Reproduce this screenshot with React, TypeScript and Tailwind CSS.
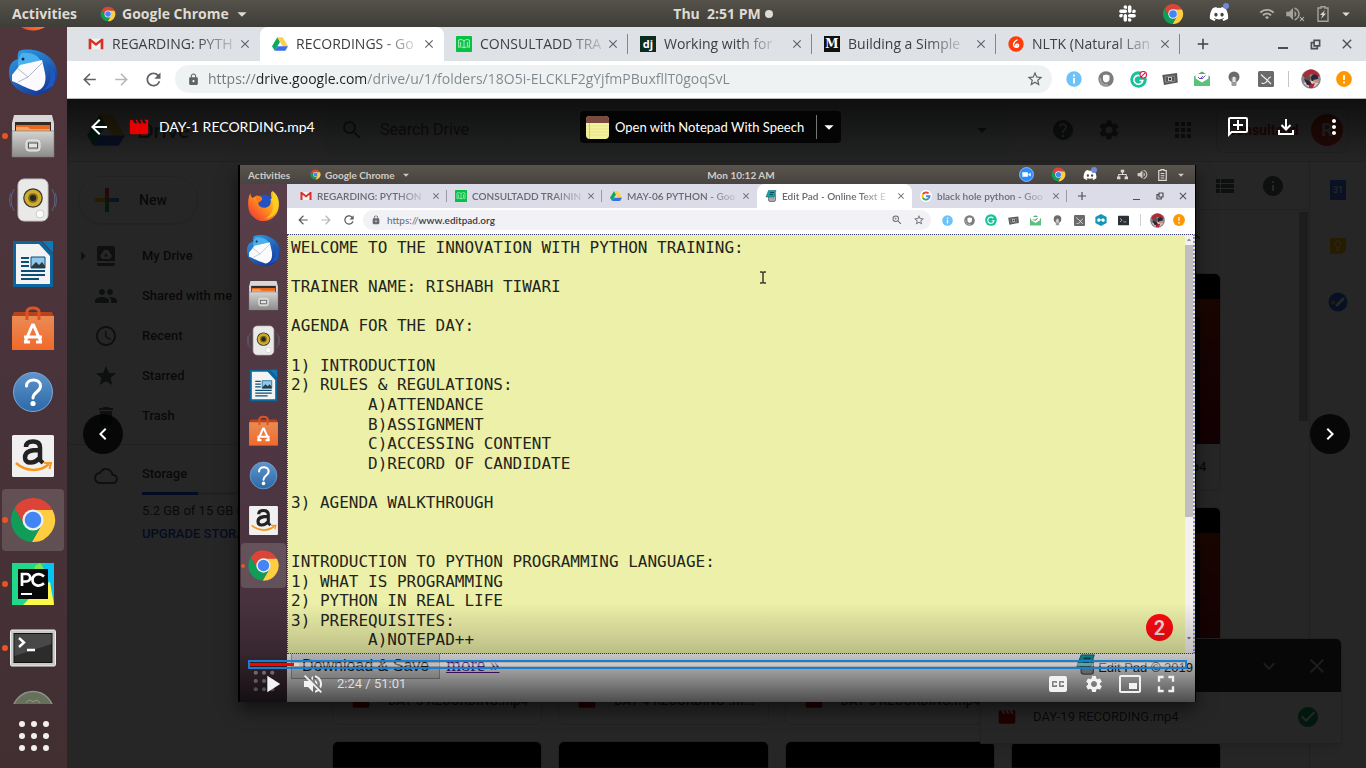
import type { ReactNode } from "react";
import {
  MdAccessTime,
  MdApps,
  MdArrowBack,
  MdArrowDropDown,
  MdArrowForward,
  MdArrowRight,
  MdArrowUpward,
  MdCheckCircle,
  MdClose,
  MdClosedCaption,
  MdDelete,
  MdExpandMore,
  MdFullscreen,
  MdHelp,
  MdInfo,
  MdKeyboardArrowLeft,
  MdKeyboardArrowRight,
  MdLock,
  MdMoreVert,
  MdMovie,
  MdOutlineAddComment,
  MdOutlineCloudQueue,
  MdPeople,
  MdPictureInPictureAlt,
  MdPlayArrow,
  MdRefresh,
  MdSearch,
  MdSettings,
  MdStar,
  MdStarBorder,
  MdViewList,
  MdVolumeOff,
  MdVolumeUp,
  MdWifi,
  MdZoomIn,
  MdAdd,
} from "react-icons/md";
import { FaSlack, FaDiscord } from "react-icons/fa";

type IconProps = { size: number };

/* ---------- brand and launcher drawings ---------- */

function ChromeLogo({ size }: IconProps) {
  return (
    <svg width={size} height={size} viewBox="0 0 48 48" aria-hidden="true">
      <path fill="#db4437" d="M5.54 12.03A22 22 0 0 1 43.6 14H24A10 10 0 0 0 15.34 29Z" />
      <path fill="#ffcd40" d="M43.6 14A22 22 0 0 1 22.86 45.97L32.66 29A10 10 0 0 0 24 14Z" />
      <path fill="#0f9d58" d="M22.86 45.97A22 22 0 0 1 5.54 12.03L15.34 29A10 10 0 0 0 32.66 29Z" />
      <circle cx="24" cy="24" r="10.5" fill="#f1f1f1" />
      <circle cx="24" cy="24" r="8.3" fill="#4285f4" />
    </svg>
  );
}

function DriveLogo({ size }: IconProps) {
  return (
    <svg width={size} height={size} viewBox="0 0 24 24" aria-hidden="true">
      <path fill="#0da960" d="M8 2 0 15.5 4 22l8-13Z" />
      <path fill="#ffcf48" d="M8 2h8l8 13.5h-8Z" />
      <path fill="#3b6ee8" d="M8 15.5h16L20 22H4Z" />
    </svg>
  );
}

function GmailLogo({ size }: IconProps) {
  return (
    <svg width={size} height={size} viewBox="0 0 24 24" aria-hidden="true">
      <path fill="#f2f2f2" d="M2 4h20v16H2Z" />
      <path fill="#d93025" d="M1 4h3l8 6.5L20 4h3v16h-4V9.5L12 15 5 9.5V20H1Z" />
    </svg>
  );
}

function BookLogo({ size }: IconProps) {
  return (
    <svg width={size} height={size} viewBox="0 0 24 24" aria-hidden="true">
      <rect width="24" height="24" rx="1" fill="#06c244" />
      <path d="M12 7C9 5 6 5 4 6v11c3-1 6-1 8 1 2-2 5-2 8-1V6c-2-1-5-1-8 1Zm0 0v11M7 9v6M17 9v6" fill="none" stroke="#c9f7d6" strokeWidth="1.3" />
    </svg>
  );
}

function LetterLogo({ label, kind }: { label: string; kind: "dj" | "m" }) {
  return (
    <span
      className={
        kind === "dj"
          ? "flex size-4 items-center justify-center bg-[#092e20] font-['Open_Sans',sans-serif] text-[11px] leading-3 font-bold text-white"
          : "flex size-4 items-center justify-center bg-[#12100e] font-['DejaVu_Serif',serif] text-[12px] leading-4 font-bold text-white"
      }
    >
      {label}
    </span>
  );
}

function GLogo({ size }: IconProps) {
  return (
    <svg width={size} height={size} viewBox="0 0 24 24" aria-hidden="true">
      <circle cx="12" cy="12" r="12" fill="#fff" />
      <g fill="none" strokeWidth="3.6">
        <path stroke="#ea4335" d="M17 7a7.2 7.2 0 0 0-11.3 1.6" />
        <path stroke="#fbbc05" d="M5.7 8.6a7.2 7.2 0 0 0 0 6.8" />
        <path stroke="#34a853" d="M5.7 15.4A7.2 7.2 0 0 0 16.8 17.4" />
        <path stroke="#4285f4" d="M16.8 17.4A7.2 7.2 0 0 0 19.2 12.5H12" />
      </g>
    </svg>
  );
}

function NltkLogo({ size }: IconProps) {
  return (
    <svg width={size} height={size} viewBox="0 0 24 24" aria-hidden="true">
      <circle cx="12" cy="12" r="11.5" fill="#ff3d0c" />
      <path d="M13.5 6c-4 2-5.500 5-5 8 .5 3.500 7 4 7.500.5.3-2.500-3.500-3-4.500-1-.5 1.500 1 2 2 1" fill="none" stroke="#fff" strokeWidth="2" strokeLinecap="round" />
    </svg>
  );
}

function PadLogo({ size }: IconProps) {
  return (
    <svg width={size} height={size} viewBox="0 0 24 24" aria-hidden="true">
      <rect x="7" y="6" width="14" height="17" rx="3" fill="#a7aaa9" stroke="#666" strokeWidth="1.5" />
      <path d="M7 1h15l-4 13H2Z" fill="#14a3ac" stroke="#0b5e66" />
      <path d="M10 5h8M9 9h7" stroke="#075059" strokeWidth="2" />
    </svg>
  );
}

function Firefox({ size }: IconProps) {
  return (
    <svg width={size} height={size} viewBox="0 0 48 48" aria-hidden="true">
      <defs>
        <linearGradient id="fox" x1="1" y1="0" x2="0" y2="1">
          <stop offset="0" stopColor="#ffe226" />
          <stop offset=".45" stopColor="#ff9a1a" />
          <stop offset="1" stopColor="#f2243b" />
        </linearGradient>
      </defs>
      <circle cx="25" cy="23" r="15" fill="#2352c7" />
      <path d="M5 6c0 3 1 5 3 7l5-3c4-1 8 1 9 4 0 3-4 4-6 6 1 6 6 8 12 7 5-1 8-6 6-12 4-1 3-6 3-12 6 4 9 12 9 20a22 22 0 0 1-44 3C1 18 2 11 5 6Z" fill="url(#fox)" />
      <path d="M37 3c7 5 11 13 9 22-2 10-10 17-19 18 9-5 13-13 10-24-1-6-3-9-2-14Z" fill="#ffd21f" opacity=".8" />
      <path d="M13 10c4-1 8 1 9 4 0 3-4 4-6 6-2-4-4-6-3-10Z" fill="#ff7a16" />
    </svg>
  );
}

function Thunderbird({ size }: IconProps) {
  return (
    <svg width={size} height={size} viewBox="0 0 48 48" aria-hidden="true">
      <defs>
        <linearGradient id="bird" x1="0" y1="0" x2=".6" y2="1">
          <stop offset="0" stopColor="#2fa4ea" />
          <stop offset="1" stopColor="#173a9b" />
        </linearGradient>
      </defs>
      <path d="M10 3C24-2 48 6 48 26c0 13-12 22-24 21C10 45 0 37 0 25c0-9 3-12 9-14-1-3 0-6 1-8Z" fill="url(#bird)" />
      <path d="M13 5c8-1 17 2 19 9-7-1-12 0-15 4-3-2-5-1-8 1 0-7 0-10 4-14Z" fill="#4bb1ee" />
      <path d="M3 27 11 17 33 12 36 25C38 35 34 42 27 43 16 40 9 35 3 33Z" fill="#fbfbfd" />
      <path d="m8 20 11 9 14-14M19 29 9 34" fill="none" stroke="#b4b6c5" strokeWidth="1" />
      <path d="M37 15c8 10 5 22-5 29l12-6c4-8 3-18-7-23Z" fill="#1e58bd" />
      <circle cx="14" cy="11" r="1.5" fill="#0e2a55" />
    </svg>
  );
}

function Files({ size }: IconProps) {
  return (
    <svg width={size} height={size} viewBox="0 0 48 48" aria-hidden="true">
      <defs>
        <linearGradient id="cab" x2="0" y2="1">
          <stop offset="0" stopColor="#d4d3d1" />
          <stop offset="1" stopColor="#8b8b89" />
        </linearGradient>
      </defs>
      <path d="M5 3h38l2 8v34H3V11Z" fill="#d8d7d5" />
      <path d="M6 10h36v10H6Z" fill="#2f2927" />
      <path d="M7 13h34v8H7Z" fill="#e9681d" />
      <path d="M7 15h12l2 2h20v5H7Z" fill="#f5a262" />
      <path d="M3 19h42v26H3Z" fill="url(#cab)" stroke="#777" strokeWidth=".6" />
      <rect x="17" y="28" width="14" height="11" rx="3" fill="#c9c8c6" stroke="#eee" />
      <rect x="19.5" y="31" width="9" height="5" fill="#e5e4e2" stroke="#555" />
    </svg>
  );
}

function Speaker({ size }: IconProps) {
  return (
    <svg width={size} height={size} viewBox="0 0 48 48" aria-hidden="true">
      <path d="M5 13q-6 11 0 22M1.500 17q-2 7 0 14M43 13q6 11 0 22M46.500 17q2 7 0 14" fill="none" stroke="#5b6080" strokeWidth="1" />
      <rect x="9" y="3" width="30" height="42" rx="6" fill="#e9e9e7" stroke="#c2c2c0" />
      <circle cx="24" cy="22" r="9.8" fill="#343434" />
      <circle cx="24" cy="22" r="8.6" fill="#d1ac2c" />
      <circle cx="24" cy="22" r="4.8" fill="#7a6a20" />
      <circle cx="24" cy="22" r="3" fill="#26251f" />
      <circle cx="31" cy="38" r="4" fill="#fafafa" stroke="#ccc" />
    </svg>
  );
}

function Writer({ size }: IconProps) {
  return (
    <svg width={size} height={size} viewBox="0 0 48 48" aria-hidden="true">
      <path d="M4 1h28l12 13v32a1 1 0 0 1-1 1H5a1 1 0 0 1-1-1Z" fill="#0b659f" />
      <path d="M33 1h11v12Z" fill="#0c7ab8" />
      <path d="M7 4h23l11 12v28H7Z" fill="#f3f3f3" />
      <path d="M12 18h8M12 22h8M12 26h8M12 31h24M12 35h24M12 39h18" stroke="#0d4d76" strokeWidth="2" />
      <path d="M22 17h14v11H22Z" fill="#8ec8ef" stroke="#0d4d76" />
      <path d="m22 27 5-5 3 3 3-3 3 4v2H22Z" fill="#2f3b3c" />
    </svg>
  );
}

function Software({ size }: IconProps) {
  return (
    <svg width={size} height={size} viewBox="0 0 48 48" aria-hidden="true">
      <defs>
        <linearGradient id="bag" x2="0" y2="1">
          <stop offset="0" stopColor="#e98b54" />
          <stop offset="1" stopColor="#f2692a" />
        </linearGradient>
      </defs>
      <path d="M5 8h38l2 5H3Z" fill="#b8421b" />
      <path d="M3 12h42v34H3Z" fill="url(#bag)" />
      <path d="M18 16V8q0-4 6-4t6 4v8" fill="none" stroke="#dc5423" strokeWidth="3" />
      <path d="M16 38 23.500 21h1L32 38M15 33h18M15 38h6M27 38h6" fill="none" stroke="#fff" strokeWidth="3" />
    </svg>
  );
}

function HelpOrb({ size }: IconProps) {
  return (
    <svg width={size} height={size} viewBox="0 0 48 48" aria-hidden="true">
      <defs>
        <linearGradient id="orb" x2="0" y2="1">
          <stop offset="0" stopColor="#6095cb" />
          <stop offset="1" stopColor="#2b69a8" />
        </linearGradient>
      </defs>
      <circle cx="24" cy="24" r="19.5" fill="url(#orb)" stroke="#7ba8d6" />
      <path d="M17.5 18c0-8 14-8 14 0 0 6-7.500 6-7.500 12" fill="none" stroke="#fff" strokeWidth="3" strokeLinecap="round" />
      <circle cx="24" cy="35.5" r="2.6" fill="#fff" />
    </svg>
  );
}

function Amazon({ size }: IconProps) {
  return (
    <svg width={size} height={size} viewBox="0 0 48 48" aria-hidden="true">
      <rect x="3" y="3" width="42" height="42" rx="1.5" fill="#f0f0f0" />
      <path d="M17 15c0-4 3-5.500 7-5.500 5 0 7 2 7 6V27M31 18c-9 0-15 1-15 7.500 0 6.500 9 7 15 0" fill="none" stroke="#222" strokeWidth="4.5" />
      <path d="m29 26 5 5" stroke="#222" strokeWidth="4" />
      <path d="M7 31c10 9 24 9 33 1" fill="none" stroke="#f7981d" strokeWidth="2.5" />
      <path d="M35 31h7l-1.500 6" fill="none" stroke="#f7981d" strokeWidth="2" />
    </svg>
  );
}

function PyCharm({ size }: IconProps) {
  return (
    <svg width={size} height={size} viewBox="0 0 48 48" aria-hidden="true">
      <path d="M3 3h42v42H3Z" fill="#21d789" />
      <path d="m28 3 5 4 4-4h8v36L28 18Z" fill="#07c3f2" />
      <path d="m26 6 5-3 4 6-2 10-9-6Z" fill="#7ee54d" />
      <path d="M14 45 34 24l7-2 4 23Z" fill="#fcf84a" />
      <rect x="9" y="9" width="30" height="30" fill="#090909" />
      <path d="M13 26V14h4.500a3.600 3.600 0 0 1 0 7.500H13M35 16.500c-5-5-11.500-1.500-11.500 3.500s6.500 8 11.500 3.300" fill="none" stroke="#fff" strokeWidth="2.700" />
      <path d="M12 34h11" stroke="#fff" strokeWidth="2" />
    </svg>
  );
}

function Terminal({ size }: IconProps) {
  return (
    <svg width={size} height={size} viewBox="0 0 48 48" aria-hidden="true">
      <rect x="1.5" y="6" width="45" height="36" rx="1.5" fill="#c9c9c7" stroke="#eee" />
      <rect x="5" y="9.5" width="38" height="29" fill="#2b2c2b" stroke="#111" />
      <path d="M5.500 10h37v10l-37 12Z" fill="#474847" />
      <path d="m10 14 5 4.500-5 4.500M18 26h8" fill="none" stroke="#fff" strokeWidth="2.4" />
    </svg>
  );
}

function GreenOrb({ size }: IconProps) {
  return (
    <svg width={size} height={size} viewBox="0 0 48 48" aria-hidden="true">
      <circle cx="24" cy="24" r="20.5" fill="#66705a" stroke="#8d938b" strokeWidth="1.5" />
      <path d="M17 15q3-5 7-1 4-4 7 1" fill="none" stroke="#939b88" />
    </svg>
  );
}

function DotGrid({ size }: IconProps) {
  const steps = [4, 16, 28];
  return (
    <svg width={size} height={size} viewBox="0 0 32 32" aria-hidden="true" fill="currentColor">
      {steps.map((y) => steps.map((x) => <circle key={`${x}-${y}`} cx={x} cy={y} r="3" />))}
    </svg>
  );
}

/* ---------- toolbar extension drawings ---------- */

function InfoExt({ size }: IconProps) {
  return (
    <svg width={size} height={size} viewBox="0 0 16 16" aria-hidden="true">
      <circle cx="8" cy="8" r="7.7" fill="#6cc3fa" />
      <path d="M8 3.500v2M8 7v5.500" stroke="#fff" strokeWidth="2" />
    </svg>
  );
}

function ShieldExt({ size }: IconProps) {
  return (
    <svg width={size} height={size} viewBox="0 0 16 16" aria-hidden="true">
      <circle cx="8" cy="8" r="7.7" fill="#7c7c7c" />
      <path d="M2.500 7a5.500 5.500 0 0 0 7.500 6.500" fill="none" stroke="#a5a5a5" strokeWidth="1.6" />
      <path d="M5 4.500 8 3.500l3.500 1V8c0 1.700-1.500 3-3.500 3.600C6 11 5 9.700 5 8Z" fill="#fff" />
    </svg>
  );
}

function GrammarExt({ size, off }: IconProps & { off?: boolean }) {
  return (
    <svg width={size} height={size} viewBox="0 0 16 16" aria-hidden="true">
      <circle cx="8" cy="8" r="7.8" fill="#15c39a" />
      <path d="M11 5.500A4.200 4.200 0 1 0 12 9H9" fill="none" stroke="#fff" strokeWidth="1.5" />
      {off && (
        <>
          <circle cx="12.500" cy="3.500" r="3" fill="#fff" stroke="#d8153a" />
          <path d="m14.500 1.500-4 4" stroke="#d8153a" />
        </>
      )}
    </svg>
  );
}

function CameraExt({ size }: IconProps) {
  return (
    <svg width={size} height={size} viewBox="0 0 16 16" aria-hidden="true">
      <path d="M.3 4 15 2l.8 9.500L2 14Z" fill="#575757" />
      <path d="m3 5.800 9.500-1 .5 5.500-9.300 1Z" fill="none" stroke="#999" strokeWidth=".8" />
      <rect x="6" y="6" width="4" height="4" fill="#ccc" />
      <circle cx="8" cy="8" r="1.2" fill="#333" />
    </svg>
  );
}

function MailExt({ size }: IconProps) {
  return (
    <svg width={size} height={size} viewBox="0 0 16 16" aria-hidden="true">
      <path d="M0 5.500 8 .5l8 5V15H0Z" fill="#4fae6b" />
      <path d="M1.500 3h13v7L8 12 1.500 9Z" fill="#fff" />
      <path d="M0 6.500 8 11.500l8-5V15H0Z" fill="#5cc17a" />
      <path d="m4 6 2 2 3-3M7 7l1 1 3.500-3.500" fill="none" stroke="#6a4bc4" />
    </svg>
  );
}

function BulbExt({ size }: IconProps) {
  return (
    <svg width={size} height={size} viewBox="0 0 16 16" aria-hidden="true">
      <circle cx="8" cy="6" r="5.5" fill="#6b6b6b" />
      <rect x="5.500" y="6" width="5" height="9" rx="1" fill="#9a9a9a" />
      <path d="M7.200 11V6.500q.8-1 1.600 0V11" fill="none" stroke="#fff" />
    </svg>
  );
}

function PenExt({ size }: IconProps) {
  return (
    <svg width={size} height={size} viewBox="0 0 16 16" aria-hidden="true">
      <rect width="16" height="16" rx="1.500" fill="#6a6a6a" />
      <path d="m3 3.500 6 5.500 4 4M3.500 12C6 13 8 12 9 10s2.500-4 4-4" fill="none" stroke="#eee" strokeWidth="1.1" />
    </svg>
  );
}

function InfinityExt({ size }: IconProps) {
  return (
    <svg width={size} height={size} viewBox="0 0 16 16" aria-hidden="true">
      <path d="m8 0 7.500 4v8L8 16 .5 12V4Z" fill="#1397b5" />
      <path d="M8 8C6 4 2.500 6 3 8.500S6.500 11 8 8s4.500-2.500 5 0-3 4-5 0Z" fill="#fff" />
    </svg>
  );
}

function ShellExt({ size }: IconProps) {
  return (
    <svg width={size} height={size} viewBox="0 0 16 16" aria-hidden="true">
      <rect y="1" width="16" height="14" rx="1" fill="#2c2f33" />
      <path d="m3 5 3 2.500L3 10M8 10h4" fill="none" stroke="#ddd" />
    </svg>
  );
}

function Avatar({ size }: IconProps) {
  return (
    <svg width={size} height={size} viewBox="0 0 20 20" aria-hidden="true">
      <circle cx="10" cy="10" r="9.8" fill="#8a8590" />
      <path d="M1.500 6q8.500-11 17 0l-1 2-7-3-7 4Z" fill="#b02a35" />
      <circle cx="6.500" cy="9" r="3" fill="#6b4d48" />
      <circle cx="13.500" cy="9" r="3.500" fill="#22293a" />
      <path d="M2.500 14q7-4 15 0-7 9-15 0Z" fill="#d4cdd0" />
      <path d="m3 10 6 2 3 5-6-1Z" fill="#2e2730" />
      <path d="m8 16 6-2-2 5H8Z" fill="#c0202e" />
      <path d="m12 11 5-1 1 3-4 1Z" fill="#c79473" />
    </svg>
  );
}

function AlertDot({ size }: IconProps) {
  return (
    <svg width={size} height={size} viewBox="0 0 16 16" aria-hidden="true">
      <circle cx="8" cy="8" r="7.9" fill="#ff9800" />
      <path d="M8 4v5M8 10.500v2" stroke="#fff" strokeWidth="1.8" />
    </svg>
  );
}

function ZoomLogo({ size }: IconProps) {
  return (
    <svg width={size} height={size} viewBox="0 0 16 16" aria-hidden="true">
      <circle cx="8" cy="8" r="7.4" fill="#2d8cff" stroke="#8cc0ff" />
      <path d="M3.500 5.500h6v5h-6ZM10 7.500l2.500-1.500v4L10 8.500Z" fill="#fff" />
    </svg>
  );
}

function NetworkIcon({ size }: IconProps) {
  return (
    <svg width={size} height={size} viewBox="0 0 16 16" aria-hidden="true" fill="#dcdad7">
      <path d="M5.500 1h5v4h-5ZM0 11h5v4H0ZM11 11h5v4h-5ZM7.300 5h1.400v2.300h5.500V11h-1.400V8.700H3.200V11H1.800V7.300h5.500Z" />
    </svg>
  );
}

function ChargingIcon() {
  return (
    <svg width="12" height="16" viewBox="0 0 12 16" aria-hidden="true">
      <path d="M4 2V.8h4V2h3v13.200H1V2Z" fill="none" stroke="#a5a29b" strokeWidth="1.4" />
      <path d="M8 4 3 9h2.500L4 13l5-5.500H6.500Z" fill="#dfdbd2" />
    </svg>
  );
}

function BatteryIcon() {
  return (
    <svg width="9" height="12" viewBox="0 0 12 16" aria-hidden="true" fill="none" stroke="#dcdad7" strokeWidth="1.6">
      <path d="M4 2V.8h4V2h3v13.200H1V2ZM3.500 6h5M3.500 9h5M3.500 12h5" />
    </svg>
  );
}

function DownloadIcon() {
  return (
    <svg width="24" height="24" viewBox="0 0 24 24" aria-hidden="true" fill="none" stroke="currentColor" strokeWidth="2">
      <path d="M12 4v10M7.500 10l4.500 4.500 4.500-4.500M5 15v4h14v-4" />
    </svg>
  );
}

function RestoreIcon({ size }: IconProps) {
  return (
    <svg width={size} height={size} viewBox="0 0 12 12" aria-hidden="true" fill="none" stroke="#4b4f54" strokeWidth="1.8">
      <path d="M4.500 1.500h6v6h-6ZM4 4H1.500v6.500h6.500V8" />
    </svg>
  );
}

/* ---------- browser chrome, shared by both windows ---------- */

type Tab = { title: string; icon: ReactNode; active?: boolean; divider?: boolean };

function TabStrip({ tabs, small }: { tabs: Tab[]; small?: boolean }) {
  return (
    <div className={small ? "flex h-6 shrink-0 items-stretch bg-[#dbdce7] pl-[5px]" : "flex h-[34px] shrink-0 items-stretch bg-[#dee1e6] pl-[9px]"}>
      <div role="tablist" className="flex">
        {tabs.map((tab) => (
          <div
            key={tab.title}
            className={
              (small ? "flex w-[155px] items-center pl-2 " : "flex w-[184px] items-center pl-3 ") +
              (tab.active ? "rounded-t-lg bg-white" : "")
            }
          >
            <button
              role="tab"
              aria-selected={!!tab.active}
              className={
                small
                  ? "flex w-[131px] items-center gap-[5px] text-left text-[10px] leading-4 font-semibold text-[#6a6a72]"
                  : "flex w-[150px] items-center gap-2 text-left text-[14px] leading-5 text-[#3c4043]"
              }
            >
              <span className="flex shrink-0">{tab.icon}</span>
              <span
                className={
                  small
                    ? "whitespace-nowrap [mask-image:linear-gradient(to_right,black_75%,rgba(0,0,0,0.2))]"
                    : "whitespace-nowrap [mask-image:linear-gradient(to_right,black_70%,rgba(0,0,0,0.2))]"
                }
              >
                {tab.title}
              </span>
            </button>
            <div className="flex flex-1 items-center justify-between">
              <button aria-label={`Close ${tab.title}`} className="text-[#5f6368]">
                <MdClose size={small ? 10 : 14} />
              </button>
              {tab.divider && <span className={small ? "h-3 w-px bg-[#9a9aa5]" : "h-5 w-px bg-[#85888c]"} />}
            </div>
          </div>
        ))}
      </div>
      <button aria-label="New tab" className={small ? "ml-2 text-[#4b4f54]" : "ml-3.5 text-[#3c4043]"}>
        <MdAdd size={small ? 14 : 18} />
      </button>
      <div className={small ? "ml-auto flex items-center pr-px text-[#4b4f54]" : "ml-auto flex items-center pr-[3px] text-[#4b4f54]"}>
        <button aria-label="Minimize" className={small ? "flex w-[23px] justify-center pt-1.5" : "flex w-8 justify-center pt-2"}>
          <span className={small ? "h-px w-[7px] bg-[#4b4f54]" : "h-0.5 w-2.5 bg-[#4b4f54]"} />
        </button>
        <button aria-label="Restore" className={small ? "flex w-[23px] justify-center" : "flex w-8 justify-center"}>
          <RestoreIcon size={small ? 8 : 11} />
        </button>
        <button aria-label="Close window" className={small ? "flex w-[23px] justify-center" : "flex w-8 justify-center"}>
          <MdClose size={small ? 12 : 16} />
        </button>
      </div>
    </div>
  );
}

const mainTabs: Tab[] = [
  { title: "REGARDING: PYTH", icon: <GmailLogo size={16} /> },
  { title: "RECORDINGS - Go", icon: <DriveLogo size={16} />, active: true },
  { title: "CONSULTADD TRA", icon: <BookLogo size={16} />, divider: true },
  { title: "Working with for", icon: <LetterLogo label="dj" kind="dj" />, divider: true },
  { title: "Building a Simple", icon: <LetterLogo label="M" kind="m" />, divider: true },
  { title: "NLTK (Natural Lan", icon: <NltkLogo size={16} />, divider: true },
];

const frameTabs: Tab[] = [
  { title: "REGARDING: PYTHON", icon: <GmailLogo size={12} />, divider: true },
  { title: "CONSULTADD TRAININ", icon: <BookLogo size={12} />, divider: true },
  { title: "MAY-06 PYTHON - Goo", icon: <DriveLogo size={12} /> },
  { title: "Edit Pad - Online Text E", icon: <PadLogo size={12} />, active: true },
  { title: "black hole python - Goo", icon: <GLogo size={12} />, divider: true },
];

const mainExtensions = [
  <InfoExt size={16} />,
  <ShieldExt size={16} />,
  <GrammarExt size={17} off />,
  <CameraExt size={16} />,
  <MailExt size={16} />,
  <BulbExt size={16} />,
  <PenExt size={16} />,
];

const frameExtensions = [
  <InfoExt size={11} />,
  <ShieldExt size={11} />,
  <GrammarExt size={12} />,
  <CameraExt size={11} />,
  <MailExt size={11} />,
  <BulbExt size={11} />,
  <PenExt size={11} />,
  <InfinityExt size={12} />,
  <ShellExt size={11} />,
];

function Toolbar() {
  return (
    <div className="flex h-[38px] shrink-0 items-center border-b border-[#b8b8ba] bg-white pr-[6px] pb-px pl-[6px] text-[#5f6368]">
      <button aria-label="Back" className="flex w-8 justify-center"><MdArrowBack size={19} /></button>
      <button aria-label="Forward" className="flex w-8 justify-center text-[#b5b7ba]"><MdArrowForward size={19} /></button>
      <button aria-label="Reload" className="flex w-8 justify-center"><MdRefresh size={21} /></button>
      <div className="mx-[6px] flex h-7 flex-1 items-center rounded-full bg-[#eff2f3] pr-2 pl-3">
        <MdLock size={13} />
        <input
          aria-label="Address"
          defaultValue="https://drive.google.com/drive/u/1/folders/18O5i-ELCKLF2gYjfmPBuxfllT0goqSvL"
          className="ml-2 min-w-0 flex-1 bg-[linear-gradient(to_right,#70757a_49px,#202124_49px,#202124_158px,#80868b_158px)] bg-clip-text text-[14px] leading-5 text-transparent outline-none"
        />
        <button aria-label="Bookmark"><MdStarBorder size={18} /></button>
      </div>
      {mainExtensions.map((icon, i) => (
        <button key={i} aria-label={`Extension ${i + 1}`} className="flex w-8 justify-center">{icon}</button>
      ))}
      <span className="flex w-3 justify-center"><span className="h-4 w-px bg-[#c4c6c9]" /></span>
      <button aria-label="Profile" className="flex w-[34px] justify-center"><Avatar size={20} /></button>
      <button aria-label="Update" className="flex w-8 justify-center"><AlertDot size={16} /></button>
    </div>
  );
}

function FrameToolbar() {
  return (
    <div className="flex h-[26px] shrink-0 items-center bg-white pr-[5px] pb-0.5 pl-1 text-[#5a5a60]">
      <span className="flex w-[23px] justify-center"><MdArrowBack size={14} /></span>
      <span className="flex w-[23px] justify-center text-[#b5b7ba]"><MdArrowForward size={14} /></span>
      <span className="flex w-[23px] justify-center"><MdRefresh size={14} /></span>
      <div className="mr-[5px] ml-[3px] flex h-5 flex-1 items-center rounded-full bg-[#f2f1f6] pr-1.5 pl-2 text-[10px] leading-4 text-[#6a6a72]">
        <MdLock size={10} />
        <span className="ml-1.5 flex-1">https://<span className="font-semibold text-[#3a3a40]">www.editpad.org</span></span>
        <MdZoomIn size={12} />
        <MdStarBorder size={12} className="ml-2.5" />
      </div>
      {frameExtensions.map((icon, i) => (
        <span key={i} className="flex w-[22px] justify-center">{icon}</span>
      ))}
      <span className="flex w-3 justify-center"><span className="h-3 w-px bg-[#d0d0d4]" /></span>
      <span className="flex w-[22px] justify-center"><Avatar size={15} /></span>
      <span className="flex w-[22px] justify-center"><AlertDot size={12} /></span>
    </div>
  );
}

/* ---------- desktop chrome ---------- */

function Discord({ size }: IconProps) {
  return (
    <span className="relative flex text-white">
      <FaDiscord size={size} />
      <span className="absolute -top-px right-0 size-1.5 rounded-full bg-[#7289da]" />
    </span>
  );
}

function SystemBar() {
  return (
    <header className="grid h-[27px] shrink-0 grid-cols-[673fr_auto_593fr] items-center bg-linear-to-b from-[#55524a] to-[#3e3d38] text-[14px] leading-5 font-bold text-[#dfdbd2]">
      <div className="flex items-center">
        <button className="ml-3 w-[88px] text-left">Activities</button>
        <button className="flex items-center gap-1.5">
          <ChromeLogo size={16} />
          Google Chrome
          <MdArrowDropDown size={22} className="-ml-1" />
        </button>
      </div>
      <button className="flex items-center gap-2">
        Thu&nbsp; 2:51 PM
        <span className="-ml-1 size-2 rounded-full bg-[#dfdbd2]" />
      </button>
      <div className="flex items-center justify-end pr-[11px]">
        <span className="flex w-[46px] justify-center text-white"><FaSlack size={19} /></span>
        <span className="flex w-[46px] justify-center"><ChromeLogo size={22} /></span>
        <span className="mr-[11px] flex w-[46px] justify-center"><Discord size={20} /></span>
        <span className="flex w-7 justify-center text-[#b5b2ab]"><MdWifi size={16} /></span>
        <span className="flex w-7 items-end justify-center text-[#a5a29b]"><MdVolumeUp size={18} /><MdClose size={8} className="-ml-1 text-[#dfdbd2]" /></span>
        <span className="flex w-7 justify-center"><ChargingIcon /></span>
        <span className="flex w-[18px] justify-center"><MdArrowDropDown size={22} /></span>
      </div>
    </header>
  );
}

type DockItem = { name: string; icon: (p: IconProps) => ReactNode; running?: boolean; current?: boolean };

const apps: DockItem[] = [
  { name: "Firefox", icon: Firefox },
  { name: "Thunderbird", icon: Thunderbird },
  { name: "Files", icon: Files, running: true },
  { name: "Rhythmbox", icon: Speaker },
  { name: "Writer", icon: Writer },
  { name: "Software", icon: Software },
  { name: "Help", icon: HelpOrb },
  { name: "Amazon", icon: Amazon },
  { name: "Chrome", icon: ChromeLogo, running: true, current: true },
  { name: "PyCharm", icon: PyCharm, running: true },
  { name: "Terminal", icon: Terminal, running: true },
  { name: "Trash", icon: GreenOrb },
];

function Dock() {
  return (
    <nav aria-label="Dock" className="flex w-[67px] shrink-0 flex-col bg-linear-to-b from-[#50363c] via-[#49333a] to-[#412f32]">
      <div className="min-h-0 flex-1 overflow-hidden">
        <ul className="-mt-[51px]">
          {apps.map(({ name, icon: Icon, running, current }) => (
            <li key={name} className="relative flex h-16 items-center pl-0.5">
              {running && <span className="absolute left-0.5 size-1.5 rounded-full bg-[#e95420]" />}
              <button aria-label={name} className={current ? "flex size-[62px] items-center justify-center rounded bg-white/15" : "flex size-[62px] items-center justify-center"}>
                <Icon size={48} />
              </button>
            </li>
          ))}
        </ul>
      </div>
      <button aria-label="Show applications" className="flex h-16 shrink-0 items-center justify-center text-[#f2f1f0]">
        <DotGrid size={32} />
      </button>
    </nav>
  );
}

/* ---------- Drive page under the preview ---------- */

type Place = { label: string; icon: ReactNode; expandable?: boolean };

function DriveDisk() {
  return (
    <svg width="20" height="22" viewBox="0 0 20 22" aria-hidden="true">
      <path d="M1 3a2 2 0 0 1 2-2h14a2 2 0 0 1 2 2v13H1Z" fill="#5f6368" />
      <path d="M1 18h18v1a2 2 0 0 1-2 2H3a2 2 0 0 1-2-2Z" fill="#5f6368" />
      <path d="M8 5h4l4 6-2 3H6l-2-3Zm2 3-2 3.500h4Z" fill="#fff" fillRule="evenodd" />
    </svg>
  );
}

const places: Place[] = [
  { label: "My Drive", icon: <DriveDisk />, expandable: true },
  { label: "Shared with me", icon: <MdPeople size={24} /> },
  { label: "Recent", icon: <MdAccessTime size={24} /> },
  { label: "Starred", icon: <MdStar size={24} /> },
  { label: "Trash", icon: <MdDelete size={24} /> },
];

const recordings = [
  "DAY-1 RECORDING.mp4",
  "DAY-1 RECORDING.mp4",
  "DAY-2 RECORDING.mp4",
  "DAY-2 RECORDING.mp4",
  "DAY-3 RECORDING.mp4",
  "DAY-4 RECORDING-.m...",
  "DAY-5 RECORDING.mp4",
  "DAY-6 RECORDING.mp4",
  "DAY-7 RECORDING.mp4",
  "DAY-8 RECORDING.mp4",
  "DAY-9 RECORDING.mp4",
  "DAY-9 RECORDING.mp4",
];

function DrivePage() {
  return (
    <div className="flex h-full flex-col bg-white font-[Roboto,sans-serif] text-[14px] leading-5 font-medium text-[#3c4043]">
      <div className="flex h-[63px] shrink-0 items-center border-b border-[#dadce0]">
        <div className="flex w-[257px] shrink-0 items-center gap-3 pl-5 font-[Lato,sans-serif] text-[22px] leading-7 text-[#5f6368]">
          <DriveLogo size={38} />
          Drive
        </div>
        <div className="flex h-12 min-w-0 flex-1 items-center rounded-lg bg-[#f1f3f4] pr-4 pl-4 text-[#5f6368]">
          <MdSearch size={24} />
          <input aria-label="Search Drive" placeholder="Search Drive" className="ml-4 min-w-0 flex-1 text-[16px] font-normal outline-none placeholder:text-[#5f6368]" />
          <MdArrowDropDown size={24} />
        </div>
        <div className="flex shrink-0 items-center pr-[18px] text-[#5f6368]">
          <MdHelp size={24} className="ml-[41px]" />
          <MdSettings size={24} className="ml-[22px]" />
          <MdApps size={24} className="ml-[50px]" />
          <div className="ml-[21px] flex h-[46px] w-[132px] items-center justify-between rounded-lg border border-[#dadce0] pr-1 pl-2.5 text-[14px] font-bold text-[#d5282c]">
            Consultadd
            <span className="flex size-8 items-center justify-center rounded-full bg-[#e8401c] text-[18px] text-white">R</span>
          </div>
        </div>
      </div>
      <div className="flex min-h-0 flex-1">
        <aside className="w-[257px] shrink-0">
          <button className="mt-3.5 ml-[11px] flex h-12 w-[120px] items-center gap-[18px] rounded-full border border-[#e4e5e7] pl-3.5 shadow-sm">
            <svg width="28" height="28" viewBox="0 0 28 28" aria-hidden="true">
              <path fill="#ea4335" d="M12 2h4v12h-4Z" />
              <path fill="#34a853" d="M12 14h4v12h-4Z" />
              <path fill="#fbbc04" d="M2 12h10v4H2Z" />
              <path fill="#4285f4" d="M16 12h10v4H16Z" />
            </svg>
            New
          </button>
          <ul className="mt-3 border-b border-[#dadce0] pb-2 text-[13px]">
            {places.map((p) => (
              <li key={p.label}>
                <a href="#" className="flex h-10 items-center">
                  <span className="flex w-[27px] justify-end text-[#5f6368]">{p.expandable && <MdArrowRight size={22} />}</span>
                  <span className="mr-6 flex w-6 justify-center text-[#5f6368]">{p.icon}</span>
                  {p.label}
                </a>
              </li>
            ))}
          </ul>
          <div className="flex pt-[19px] text-[13px]">
            <MdOutlineCloudQueue size={24} className="mr-6 ml-[27px] shrink-0 text-[#5f6368]" />
            <div className="flex-1">
              <p>Storage</p>
              <div className="mt-2 h-[3px] bg-[#dadce0]"><div className="h-[3px] w-14 bg-[#1a54e8]" /></div>
              <p className="mt-1.5 font-normal">5.2 GB of 15 GB used</p>
              <a href="#" className="mt-[3px] block whitespace-nowrap text-[#1a54e8]">UPGRADE STORAGE</a>
            </div>
          </div>
        </aside>
        <main className="flex min-w-0 flex-1 flex-col">
          <div className="flex h-12 shrink-0 items-center justify-end gap-6 border-b border-[#dadce0] pr-6 text-[#5f6368]">
            <MdViewList size={24} />
            <MdInfo size={24} />
          </div>
          <div className="flex min-h-0 flex-1">
            <div className="min-w-0 flex-1 overflow-hidden pr-[78px] pl-2">
              <div className="flex h-[63px] items-center justify-end pr-[18px] pb-2"><MdArrowUpward size={18} /></div>
              <ul className="grid grid-cols-4 gap-4 text-[13px]">
                {recordings.map((name, i) => (
                  <li key={i} className="overflow-hidden rounded-md border border-[#dadce0]">
                    <div className="flex h-[170px] flex-col bg-black">
                      <div className="mt-[25px] flex flex-1 bg-linear-to-b from-[#a82a08] to-[#7d0016]">
                        <div className="mt-[18px] mr-5 flex-1 bg-[#1a0512]" />
                      </div>
                    </div>
                    <div className="flex h-[46px] items-center pr-2.5 pl-[18px]">
                      <MdMovie size={20} className="mr-[17px] shrink-0 text-[#d50000]" />
                      <span className="flex-1 whitespace-nowrap">{name}</span>
                    </div>
                  </li>
                ))}
              </ul>
            </div>
            <div className="w-[10px] shrink-0 pt-0.5"><div className="h-[209px] w-[9px] bg-[#c1c1c1]" /></div>
          </div>
        </main>
        <aside className="flex w-[57px] shrink-0 flex-col items-center gap-9 border-l border-[#dadce0] pt-[18px]">
          <span className="flex h-5 w-4 items-center justify-center bg-[#4374e8] text-[9px] text-white">31</span>
          <span className="flex size-5 items-center justify-center">
            <svg width="16" height="16" viewBox="0 0 16 16" aria-hidden="true">
              <path d="M1 0h14a1 1 0 0 1 1 1v11l-4 4H1a1 1 0 0 1-1-1V1a1 1 0 0 1 1-1Z" fill="#fbbc04" />
              <path d="M6 12h4M6.500 10V8.500a3 3 0 1 1 3 0V10Z" fill="none" stroke="#fff" />
            </svg>
          </span>
          <svg width="20" height="20" viewBox="0 0 20 20" aria-hidden="true">
            <circle cx="10" cy="10" r="9.5" fill="#3b6ef0" />
            <circle cx="5" cy="10.5" r="2" fill="#fbbc04" />
            <path d="m9 13 6-6" stroke="#fff" strokeWidth="3" strokeLinecap="round" />
          </svg>
        </aside>
      </div>
    </div>
  );
}

function UploadPanel() {
  return (
    <section aria-label="Uploads" className="absolute right-6 bottom-6 w-[362px] overflow-hidden rounded-t-md border border-[#dadce0] bg-white font-[Roboto,sans-serif] text-[13px] leading-5 text-[#3c4043] shadow-lg">
      <div className="flex h-[53px] items-center justify-end gap-6 bg-[#323232] pr-3 text-[#b8b8b8]">
        <MdExpandMore size={24} />
        <MdClose size={24} />
      </div>
      <div className="flex h-[51px] items-center pr-[21px] pb-0.5 pl-4">
        <MdMovie size={20} className="text-[#d50000]" />
        <span className="ml-4 flex-1">DAY-19 RECORDING.mp4</span>
        <MdCheckCircle size={24} className="text-[#0f9d58]" />
      </div>
    </section>
  );
}

/* ---------- recording shown in the player ---------- */

const notes = [
  "WELCOME TO THE INNOVATION WITH PYTHON TRAINING:",
  "",
  "TRAINER NAME: RISHABH TIWARI",
  "",
  "AGENDA FOR THE DAY:",
  "",
  "1) INTRODUCTION",
  "2) RULES & REGULATIONS:",
  "        A)ATTENDANCE",
  "        B)ASSIGNMENT",
  "        C)ACCESSING CONTENT",
  "        D)RECORD OF CANDIDATE",
  "",
  "3) AGENDA WALKTHROUGH",
  "",
  "",
  "INTRODUCTION TO PYTHON PROGRAMMING LANGUAGE:",
  "1) WHAT IS PROGRAMMING",
  "2) PYTHON IN REAL LIFE",
  "3) PREREQUISITES:",
  "        A)NOTEPAD++",
];

function Frame() {
  return (
    <div className="flex h-full flex-col overflow-hidden">
      <div className="grid h-[19px] shrink-0 grid-cols-[467fr_auto_420fr] items-center bg-linear-to-b from-[#5a544d] to-[#484340] text-[10px] leading-4 font-bold text-[#d0ccc5]">
        <div className="flex items-center">
          <span className="ml-2 w-[62px]">Activities</span>
          <span className="flex items-center gap-1"><ChromeLogo size={11} />Google Chrome<MdArrowDropDown size={14} /></span>
        </div>
        <span>Mon 10:12 AM</span>
        <div className="flex items-center justify-end pr-[5px]">
          <span className="flex w-8 justify-center"><ZoomLogo size={15} /></span>
          <span className="flex w-8 justify-center"><ChromeLogo size={15} /></span>
          <span className="mr-1.5 flex w-8 justify-center"><Discord size={14} /></span>
          <span className="flex w-5 justify-center"><NetworkIcon size={11} /></span>
          <span className="flex w-5 justify-center"><MdVolumeUp size={13} /></span>
          <span className="flex w-5 justify-center"><BatteryIcon /></span>
          <span className="flex w-[18px] justify-center"><MdArrowDropDown size={14} /></span>
        </div>
      </div>
      <div className="flex min-h-0 flex-1">
        <div className="flex w-[47px] shrink-0 flex-col bg-linear-to-b from-[#593f4a] to-[#432f3a]">
          <div className="-mt-px">
            {apps.slice(0, 9).map(({ name, icon: Icon, current }) => (
              <span key={name} className={current ? "mx-px flex h-[45px] items-center rounded-sm bg-white/15" : "mx-px flex h-[45px] items-center"}>
                <span className={current ? "size-1 rounded-full bg-[#e95420]" : "size-1"} />
                <span className="flex flex-1 justify-center pr-1"><Icon size={33} /></span>
              </span>
            ))}
          </div>
          <span className="mt-auto flex justify-center pb-2.5 text-[#b9b3b6]"><DotGrid size={22} /></span>
        </div>
        <div className="flex min-w-0 flex-1 flex-col bg-white">
          <TabStrip tabs={frameTabs} small />
          <FrameToolbar />
          <div className="relative flex h-[420px] shrink-0 border border-r-2 border-dotted border-[#3b3f7d] border-r-[#8890dd] bg-[#ecf0a8]">
            <div className="grid h-[415px] flex-1 grid-rows-[repeat(21,minmax(0,1fr))] pt-[3px] pl-[3px] font-['DejaVu_Sans_Mono','Liberation_Mono',monospace] text-[16px] leading-5 whitespace-pre text-[#24241c]">
              {notes.map((line, i) => (
                <p key={i}>{line}</p>
              ))}
            </div>
            <div className="flex w-2 flex-col items-center bg-[#f4eff1]">
              <MdArrowDropDown size={10} className="rotate-180 text-[#77777c]" />
              <span className="h-[272px] w-2 bg-[#c1bdc0]" />
              <MdArrowDropDown size={10} className="mt-auto mb-2.5 text-[#55555a]" />
            </div>
            <svg width="8" height="13" viewBox="0 0 8 13" aria-hidden="true" className="absolute top-9 left-[471px]">
              <path d="M1 1h2l1 1 1-1h2M4 2v9M1 12h2l1-1 1 1h2" fill="none" stroke="#3a3a30" strokeWidth="1.5" />
            </svg>
            <span className="absolute right-5 bottom-3 flex size-[27px] items-center justify-center rounded-full bg-[#ff0a10] font-[Roboto,sans-serif] text-[20px] leading-5 font-semibold text-[#fbdada]">2</span>
          </div>
          <div className="flex items-start font-['Liberation_Sans',sans-serif] text-[16px] leading-5 text-[#222]">
            <button className="ml-1 border border-t-0 border-[#a9a9a9] bg-[#e4e4e4] px-2.5 pt-0.5 pb-0.5 whitespace-nowrap">Download &amp; Save</button>
            <a href="#" className="ml-1.5 pt-px font-['Liberation_Serif',serif] text-[19px] text-[#551a8b] underline">more »</a>
            <span className="ml-auto flex items-start gap-0.5 pr-0.5 text-[13px]"><PadLogo size={21} /><span className="pt-1">Edit Pad © 2019</span></span>
          </div>
        </div>
      </div>
    </div>
  );
}

function Player() {
  return (
    <section aria-label="Video player" className="relative h-full min-w-0 flex-1 border-r border-l-2 border-black bg-black shadow-[0_8px_16px_rgba(0,0,0,0.5)]">
      <Frame />
      <div className="absolute inset-x-0 bottom-0 flex h-[100px] flex-col justify-end bg-linear-to-b from-transparent via-black/20 via-50% to-black/70 px-2 font-[Roboto,sans-serif] text-white">
        <input
          type="range"
          aria-label="Seek"
          min={0}
          max={3061}
          defaultValue={144}
          className="h-[9px] w-full appearance-none border-2 border-[#1c7dcc] bg-[linear-gradient(to_right,#f00_4.7%,#d8d8d8_4.7%,#d8d8d8_5.2%,rgba(255,255,255,0.35)_5.2%)] py-px [background-clip:content-box] [&::-webkit-slider-thumb]:size-0 [&::-webkit-slider-thumb]:appearance-none"
        />
        <div className="flex h-[33px] items-center pb-1 text-[#f2f2f2]">
          <button aria-label="Play" className="ml-2.5 flex w-8 items-center"><MdPlayArrow size={28} /></button>
          <button aria-label="Unmute" className="ml-[11px]"><MdVolumeOff size={24} /></button>
          <span className="ml-3 text-[13px] leading-4 text-[#dddddd]">2:24 / 51:01</span>
          <div className="ml-auto flex items-center gap-3 pr-[9px]">
            <button aria-label="Captions"><MdClosedCaption size={24} /></button>
            <button aria-label="Settings"><MdSettings size={20} className="mx-0.5" /></button>
            <button aria-label="Miniplayer"><MdPictureInPictureAlt size={24} /></button>
            <button aria-label="Full screen"><MdFullscreen size={28} className="-mx-0.5" /></button>
          </div>
        </div>
      </div>
    </section>
  );
}

function Preview() {
  return (
    <div role="dialog" aria-label="DAY-1 RECORDING.mp4" className="absolute inset-0 flex flex-col bg-black/85 font-[Lato,sans-serif] text-white">
      <div className="grid h-[66px] shrink-0 grid-cols-[513fr_auto_525fr] items-center bg-linear-to-b from-black/60 to-transparent pb-[10px] text-[14px] leading-5">
        <div className="flex items-center">
          <button aria-label="Back" className="ml-5"><MdArrowBack size={24} /></button>
          <MdMovie size={22} className="ml-[17px] text-[#e60000]" />
          <h1 className="ml-[9px] whitespace-nowrap">DAY-1 RECORDING.mp4</h1>
        </div>
        <div className="flex h-8 w-[261px] items-center rounded-sm bg-black/80 pl-1.5">
          <button className="flex flex-1 items-center gap-1.5 text-[13px] whitespace-nowrap">
            <svg width="23" height="23" viewBox="0 0 23 23" aria-hidden="true">
              <rect width="23" height="23" rx="4" fill="#f3f19c" />
              <path d="M0 7V4a4 4 0 0 1 4-4h15a4 4 0 0 1 4 4v3Z" fill="#7a4a40" />
              <path d="M0 10h23M0 13h23M0 16h23M0 19h23" stroke="#e6e48c" />
              <path d="M3.500 7v16" stroke="#e5a36d" strokeWidth=".7" />
            </svg>
            Open with Notepad With Speech
          </button>
          <span className="h-6 w-px bg-[#777]" />
          <button aria-label="More apps" className="flex w-6 justify-center"><MdArrowDropDown size={22} /></button>
        </div>
        <div className="flex items-center justify-end gap-6 pr-5">
          <button aria-label="Add a comment"><MdOutlineAddComment size={24} className="-scale-x-100" /></button>
          <button aria-label="Download"><DownloadIcon /></button>
          <button aria-label="More actions"><MdMoreVert size={24} /></button>
        </div>
      </div>
      <div className="flex min-h-0 flex-1 items-center px-4">
        <button aria-label="Previous" className="mr-[115px] flex size-10 shrink-0 items-center justify-center rounded-full bg-black/80"><MdKeyboardArrowLeft size={24} /></button>
        <Player />
        <button aria-label="Next" className="ml-[114px] flex size-10 shrink-0 items-center justify-center rounded-full bg-black/80"><MdKeyboardArrowRight size={24} /></button>
      </div>
      <div className="h-[66px] shrink-0" />
    </div>
  );
}

export default function App() {
  return (
    <div className="flex h-screen flex-col overflow-hidden font-['Open_Sans','Noto_Sans',sans-serif]">
      <SystemBar />
      <div className="flex min-h-0 flex-1">
        <Dock />
        <div className="flex min-w-0 flex-1 flex-col">
          <TabStrip tabs={mainTabs} />
          <Toolbar />
          <div className="relative min-h-0 flex-1 overflow-hidden">
            <DrivePage />
            <UploadPanel />
            <Preview />
          </div>
        </div>
      </div>
    </div>
  );
}
